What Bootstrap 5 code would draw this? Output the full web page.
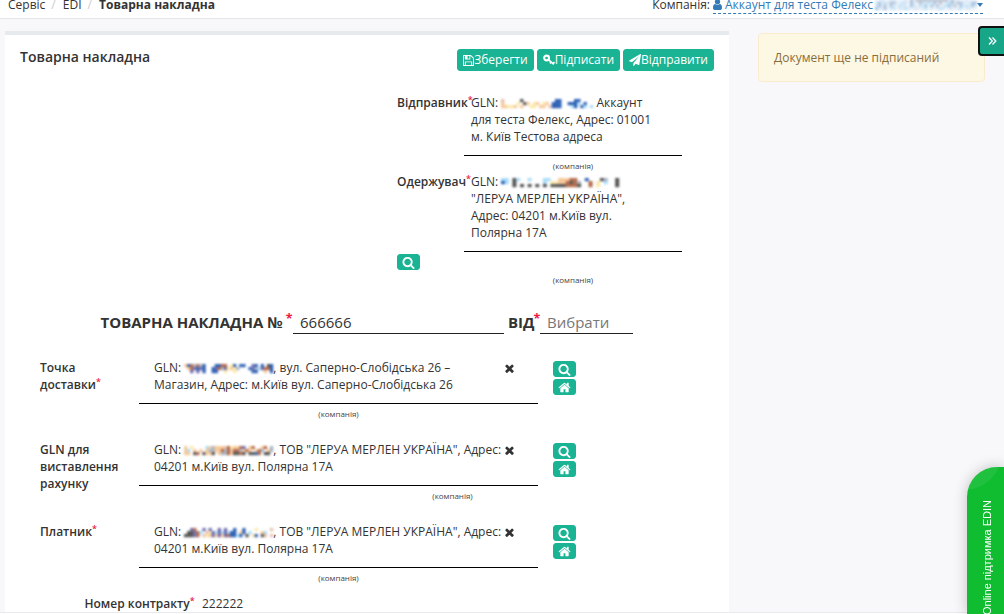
<!DOCTYPE html>
<html lang="uk">
<head>
<meta charset="utf-8">
<title>Товарна накладна</title>
<link href="https://cdn.jsdelivr.net/npm/bootstrap@5.3.0/dist/css/bootstrap.min.css" rel="stylesheet">
<style>
body{font-family:"Open Sans","Noto Sans",sans-serif;font-size:12px;line-height:17px;color:#333;background:#f8f8fb;height:614px;overflow:hidden;position:relative}
.topbar{height:19px;border-bottom:1px solid #e4e6e9;line-height:17px}
.crumbs{padding:0 0 0 8px;margin-top:-4px;height:17px}
.crumbs .sep{color:#ccc;width:17.500px;padding-left:6px}
.company{margin:-4px 21px 0 0;height:17px}
.company a{color:#337ab7;text-decoration:none;border-bottom:1px dashed #337ab7;height:18px}
.ico{fill:currentColor;display:block;flex:none}
.page{padding:12px 0 0 5px;height:594px}
.sheet{width:724px;height:582px;background:#fff;border-top:4px solid #e7eaec;flex:none}
.sheet-head{height:59px;padding:14px 15px 0}
.sheet-head h5{font-size:14px;font-weight:600;line-height:17px;margin:-1px 0 0}
.tools{gap:3px}
.btn-main{--bs-btn-bg:#1ab394;--bs-btn-border-color:#1ab394;--bs-btn-color:#fff;--bs-btn-hover-bg:#18a689;--bs-btn-hover-color:#fff;border-radius:3px;padding:0 5px;font-size:12px;line-height:20px;height:22px;display:flex;align-items:center}
.btn-mini{padding:0;width:23px;height:16px;justify-content:center}
.lbl{font-weight:600}
.req{color:#ed1c40;font-size:9px;font-weight:600;line-height:0;position:relative;top:-4px}
.number .req{font-size:12.500px;font-weight:700;top:-5px;margin-left:-1px}
.line{border-bottom:1px solid #000}
.cap{font-size:8px;line-height:10px;color:#444;text-align:center}
.party{padding-left:392px}
.party .lbl{width:67px;flex:none;white-space:nowrap}
.party .field{width:218px;padding-left:7px}
.party .field div{white-space:nowrap}
.number{height:34px;padding-left:95.500px;font-size:15px;line-height:20px}
.number b{font-weight:700;white-space:nowrap}
.number .inp{border-bottom:1px solid #222;height:22px;padding-left:7px}
.point{height:82px;padding-left:35px}
.point .lbl{width:99px;flex:none}
.point .field{width:399px;height:45px;padding-left:15px;position:relative;white-space:nowrap}
.point .clear{position:absolute;left:366px;top:5px}
.minis{margin:2px 0 0 15px;gap:2px}
.pix{display:inline-block;vertical-align:-3px;filter:blur(.9px);overflow:visible}
.notice{margin:2px 0 0 29px;width:227px;height:49px;background:#fcf8e3;border:1px solid #faebcc;color:#8a6d3b;border-radius:4px;padding:15px;line-height:17px}
.toggler{position:absolute;right:-4px;top:26px;width:30px;height:30px;background:#18a689;border:2px solid #111;border-radius:4px;color:#fff;padding:8px}
.chat{position:absolute;left:967px;top:467px;width:37px;height:147px;border-radius:30px 0 0 0;background:#10bd30;box-shadow:0 0 14px rgba(0,0,0,.22);overflow:hidden}
.chat:before{content:"";position:absolute;left:-42px;top:-52px;width:77px;height:75px;border-radius:50%;background:rgba(255,255,255,.07)}
.chat span{position:absolute;left:12px;top:33px;writing-mode:vertical-rl;transform:rotate(180deg);color:#fff;font:11px/16px "Liberation Sans",sans-serif;white-space:nowrap}
.foot{position:absolute;left:0;right:0;top:612px;height:2px;background:#fff;border-top:1px solid #e7eaec}
</style>
</head>
<body>
<svg class="d-none">
<symbol id="search" viewBox="0 0 1792 1792"><path d="M1216 832q0-185-131.500-316.500T768 384 451.500 515.500 320 832t131.500 316.500T768 1280t316.500-131.500T1216 832zm512 832q0 52-38 90t-90 38q-54 0-90-38l-343-342q-179 124-399 124-143 0-273.500-55.500t-225-150-150-225T64 832t55.500-273.500 150-225 225-150T768 128t273.500 55.500 225 150 150 225T1472 832q0 220-124 399l343 343q37 37 37 90z"/></symbol>
<symbol id="home" viewBox="0 0 1792 1792"><path d="M1472 992v480q0 26-19 45t-45 19h-384v-384H768v384H384q-26 0-45-19t-19-45V992q0-1 .5-3t.5-3l575-474 575 474q1 2 1 6zm223-69l-62 74q-8 9-21 11h-3q-13 0-21-7L896 424l-692 577q-12 8-24 7-13-2-21-11l-62-74q-8-10-7-23.500T101 878L820 279q32-26 76-26t76 26l244 204V288q0-14 9-23t23-9h192q14 0 23 9t9 23v408l219 182q10 8 11 21.500t-7 23.500z"/></symbol>
<symbol id="times" viewBox="302 302 1188 1252"><path d="M1490 1322q0 40-28 68l-136 136q-28 28-68 28t-68-28l-294-294-294 294q-28 28-68 28t-68-28l-136-136q-28-28-28-68t28-68l294-294-294-294q-28-28-28-68t28-68l136-136q28-28 68-28t68 28l294 294 294-294q28-28 68-28t68 28l136 136q28 28 28 68t-28 68l-294 294 294 294q28 28 28 68z"/></symbol>
<symbol id="plane" viewBox="0 0 1792 1792"><path d="M1764 11q33 24 27 64l-256 1536q-5 29-32 45-14 8-31 8-11 0-24-5l-453-185-242 295q-18 23-49 23-13 0-22-4-19-7-30.500-23.500T640 1728v-349l864-1059-1069 925-395-162q-37-14-40-55-2-40 32-59L1696 9q15-9 32-9 20 0 36 11z"/></symbol>
<symbol id="save" viewBox="128 128 1536 1536"><path d="M512 1536h768v-384H512v384zm896 0h128V640q0-14-10-38.500t-20-34.500l-281-281q-10-10-34-20t-39-10v416q0 40-28 68t-68 28H480q-40 0-68-28t-28-68V256H256v1280h128v-416q0-40 28-68t68-28h832q40 0 68 28t28 68v416zm-384-928V288q0-13-9.500-22.500T992 256H800q-13 0-22.500 9.500T768 288v320q0 13 9.500 22.500T800 640h192q13 0 22.500-9.500t9.500-22.500zm640 32v928q0 40-28 68t-68 28H224q-40 0-68-28t-28-68V224q0-40 28-68t68-28h928q40 0 88 20t76 48l280 280q28 28 48 76t20 88z"/></symbol>
<symbol id="user" viewBox="256 128 1280 1536"><path d="M1536 1399q0 109-62.500 187t-150.500 78H469q-88 0-150.500-78T256 1399q0-85 8.500-160.500t31.500-152 58.500-131 94-89T583 832q131 128 313 128t313-128q76 0 134.500 34.500t94 89 58.500 131 31.500 152 8.500 160.500zm-256-887q0 159-112.500 271.500T896 896 624.500 783.500 512 512t112.500-271.500T896 128t271.500 112.500T1280 512z"/></symbol>
<symbol id="key" viewBox="0 0 12 12"><circle cx="3.600" cy="4" r="2.400" fill="none" stroke="currentColor" stroke-width="2.100"/><path d="M5.400 5.600L10.800 10.300M8 8l-1.200 1.400M10 9.600l1.500-1.600" fill="none" stroke="currentColor" stroke-width="1.700"/></symbol>
</svg>

<header class="topbar bg-white d-flex justify-content-between">
  <nav class="crumbs d-flex"><span>Сервіс</span><span class="sep">/</span><span>EDI</span><span class="sep">/</span><b>Товарна накладна</b></nav>
  <div class="company d-flex"><span style="margin-right:3px">Компанія:</span>
    <a href="#" class="d-flex"><svg class="ico" style="margin:3px 3px 0 0" width="9" height="11"><use href="#user"/></svg>Аккаунт для теста Фелекс<svg class="pix" style="margin:2px 0 0 2px;filter:blur(1.300px);opacity:.8" data-w="102" data-h="14" data-p="blue"></svg><svg class="ico" style="margin-top:7px" width="6" height="4" viewBox="0 0 6 4"><path d="M0 0h6L3 4z"/></svg></a></div>
</header>

<main class="page d-flex">
  <section class="sheet">
    <div class="sheet-head d-flex justify-content-between">
      <h5>Товарна накладна</h5>
      <div class="tools d-flex">
        <button class="btn btn-main"><svg class="ico" width="11" height="11"><use href="#save"/></svg>Зберегти</button>
        <button class="btn btn-main"><svg class="ico" width="12" height="12"><use href="#key"/></svg>Підписати</button>
        <button class="btn btn-main"><svg class="ico" width="12" height="12"><use href="#plane"/></svg>Відправити</button>
      </div>
    </div>

    <div class="party d-flex" style="height:79px">
      <div class="lbl">Відправник<span class="req">*</span></div>
      <div><div class="field line" style="height:62px"><div>GLN: <svg class="pix" data-w="92" data-p="warm"></svg> Аккаунт</div><div>для теста Фелекс, Адрес: 01001</div><div>м. Київ Тестова адреса</div></div>
      <div class="cap" style="margin-top:5px">(компанія)</div></div>
    </div>
    <div class="party d-flex" style="height:139px">
      <div class="lbl">Одержувач<span class="req">*</span>
        <button class="btn btn-main btn-mini" style="margin-top:64px"><svg class="ico" width="13" height="13"><use href="#search"/></svg></button></div>
      <div><div class="field line" style="height:79px"><div>GLN: <svg class="pix" data-w="118" data-p="dark"></svg></div><div>"ЛЕРУА МЕРЛЕН УКРАЇНА",</div><div>Адрес: 04201 м.Київ вул.</div><div>Полярна 17А</div></div>
      <div class="cap" style="margin-top:23px">(компанія)</div></div>
    </div>

    <div class="number d-flex">
      <b style="width:192.500px">ТОВАРНА НАКЛАДНА № <span class="req">*</span></b>
      <div class="inp" style="width:211px">666666</div>
      <b style="width:32px;margin-left:4px">ВІД<span class="req">*</span></b>
      <div class="inp" style="width:93px;color:#777">Вибрати</div>
    </div>

    <div style="margin-top:13px">
      <div class="point d-flex">
        <div class="lbl">Точка<br>доставки<span class="req">*</span></div>
        <div><div class="field line"><div>GLN: <svg class="pix" data-w="89" data-p="mix"></svg>, вул. Саперно-Слобідська 26 –</div><div>Магазин, Адрес: м.Київ вул. Саперно-Слобідська 26</div><svg class="ico clear" width="9" height="9"><use href="#times"/></svg></div><div class="cap" style="margin-top:5px">(компанія)</div></div>
        <div class="minis d-flex flex-column"><button class="btn btn-main btn-mini"><svg class="ico" width="13" height="13"><use href="#search"/></svg></button><button class="btn btn-main btn-mini"><svg class="ico" width="13" height="13"><use href="#home"/></svg></button></div>
      </div>
      <div class="point d-flex">
        <div class="lbl">GLN для<br>виставлення<br>рахунку</div>
        <div><div class="field line"><div>GLN: <svg class="pix" data-w="89" data-p="gold"></svg>, ТОВ "ЛЕРУА МЕРЛЕН УКРАЇНА", Адрес:</div><div>04201 м.Київ вул. Полярна 17А</div><svg class="ico clear" width="9" height="9"><use href="#times"/></svg></div><div class="cap" style="margin:5px 0 0 228px">(компанія)</div></div>
        <div class="minis d-flex flex-column"><button class="btn btn-main btn-mini"><svg class="ico" width="13" height="13"><use href="#search"/></svg></button><button class="btn btn-main btn-mini"><svg class="ico" width="13" height="13"><use href="#home"/></svg></button></div>
      </div>
      <div class="point d-flex" style="height:72px">
        <div class="lbl">Платник<span class="req">*</span></div>
        <div><div class="field line"><div>GLN: <svg class="pix" data-w="89" data-p="violet"></svg>, ТОВ "ЛЕРУА МЕРЛЕН УКРАЇНА", Адрес:</div><div>04201 м.Київ вул. Полярна 17А</div><svg class="ico clear" width="9" height="9"><use href="#times"/></svg></div><div class="cap" style="margin-top:5px">(компанія)</div></div>
        <div class="minis d-flex flex-column"><button class="btn btn-main btn-mini"><svg class="ico" width="13" height="13"><use href="#search"/></svg></button><button class="btn btn-main btn-mini"><svg class="ico" width="13" height="13"><use href="#home"/></svg></button></div>
      </div>
      <div class="d-flex" style="padding-left:79.500px"><div class="lbl" style="width:117.500px">Номер контракту<span class="req">*</span></div><div>222222</div></div>
    </div>
  </section>
  <aside><div class="notice">Документ ще не підписаний</div></aside>
</main>
<button class="toggler" aria-label="Розгорнути"><svg class="ico" width="9" height="10" viewBox="0 0 9 10"><path d="M1 1.500L4.300 5 1 8.500M4.500 1.500L7.800 5 4.500 8.500" fill="none" stroke="#fff" stroke-width="1.300"/></svg></button>
<div class="foot"></div>
<div class="chat"><span>Online підтримка EDIN</span></div>

<script src="https://cdn.jsdelivr.net/npm/bootstrap@5.3.0/dist/js/bootstrap.bundle.min.js"></script>
<script>
// Masked account numbers: each row is a strip of coloured cells, "." is empty
const colours={o:'#f7c99a',y:'#fbe9a9',k:'#555',b:'#2f62b5',c:'#a9dcf8',v:'#6d6bb0',r:'#b46a4b',g:'#aab4c4',l:'#cfe0f1',p:'#e7bfae',d:'#222f58',s:'#8fb6dc',w:'#e6eef8'};
const masks={
 warm:['p.....k..........bb....bb....','o....y.ko.yo.yo.bbb..bbbc.b..','ooyyo.o..yy.oo.pbbb...cb.bc.c'],
 dark:['cc.kc..c...cc..ooorr..b...kg..k','bc.k.......c.yyoorkrg..r.y.c..k','...k.k.k.k.k.kkkkrrrk..r.y....k'],
 mix:['obrgrgb...bbrr.yb.bb..vb.b.kb','.orvbvb..bvrgvyoyg...bvgcvrrb','..v.v.b..bb..y..y.....bb..o.b'],
 gold:['o.y....cogooopryoorv.or..or.g','oc.o.o.oggoorgrprrgoro.org.og','oo.kr.kook.oggrokkrk.kkbr.kk.'],
 violet:['..vr..v.v..v.v..b..b...y....p','.kkvrc.pyvcvcvcbb.ob.c...oc..','kkkvr.pyovovovrbbcb.k.yb.kp.p'],
 blue:['wwlwwllwwwlwglggggggggggglgllwwlwww','lslclgslwclwslwgclclslgwlcslgslwlss','lslgwslwcllwslwclswslgwlcslgwslclsl','sllswlcwllclwllwlcwlwlclwllwlcwllww']
};
document.querySelectorAll('.pix').forEach(s=>{
  const rows=masks[s.dataset.p],w=+s.dataset.w,h=+(s.dataset.h||12);
  s.setAttribute('width',w);s.setAttribute('height',h);
  const cw=w/rows[0].length,ch=(h-3)/rows.length;
  rows.forEach((r,j)=>[...r].forEach((c,i)=>{if(!colours[c])return;
    const q=document.createElementNS('http://www.w3.org/2000/svg','rect');
    q.setAttribute('x',i*cw);q.setAttribute('y',1+j*ch);q.setAttribute('width',cw+.2);q.setAttribute('height',ch+.2);q.setAttribute('fill',colours[c]);s.append(q);}));
});
</script>
</body>
</html>
